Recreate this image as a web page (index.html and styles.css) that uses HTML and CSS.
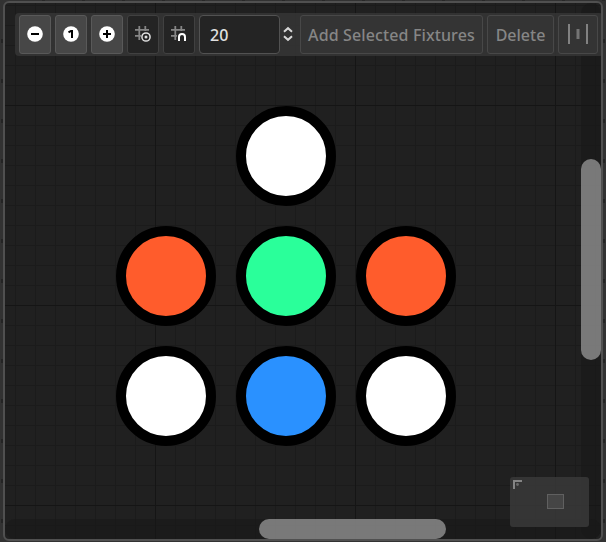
FILE: index.html
```
<!DOCTYPE html>
<html lang="en">
<head>
<meta charset="utf-8">
<title>Fixture Layout</title>
<link rel="stylesheet" href="styles.css">
</head>
<body>
<main class="graph">
  <div class="track track-v"></div>
  <div class="track track-h"></div>
  <div class="toolbar">
    <button class="btn solid" aria-label="Zoom out"><svg width="16" height="16"><circle cx="8" cy="8" r="7.8" fill="#fff"/><rect x="4" y="7" width="8" height="2" fill="#000"/></svg></button>
    <button class="btn solid" aria-label="Reset zoom"><svg width="16" height="16"><circle cx="8" cy="8" r="7.8" fill="#fff"/><path d="M5.5 6.4 8 4.9h1V12" fill="none" stroke="#000" stroke-width="2"/></svg></button>
    <button class="btn solid" aria-label="Zoom in"><svg width="16" height="16"><circle cx="8" cy="8" r="7.8" fill="#fff"/><path d="M4 8h8M8 4v8" stroke="#000" stroke-width="2"/></svg></button>
    <button class="btn dark" aria-label="Show grid"><svg width="16" height="16"><path d="M4.3 0v14M10.3 0v5M0 3.8h14M0 9.8h6" fill="none" stroke="#868686" stroke-width="1.8"/><circle cx="11" cy="11" r="4.1" fill="#252525" stroke="#e0e0e0" stroke-width="1.5"/><circle cx="11" cy="11" r="1.5" fill="#e0e0e0"/></svg></button>
    <button class="btn dark" aria-label="Snap to grid"><svg width="16" height="16"><path d="M4.3 0v14M10.3 0v5M0 3.8h14M0 9.8h6" fill="none" stroke="#868686" stroke-width="1.8"/><path d="M8 15v-4a3 3 0 0 1 6 0v4" fill="none" stroke="#fff" stroke-width="2"/></svg></button>
    <div class="spin"><input class="field" value="20" aria-label="Grid size"><svg class="arrows" width="12" height="16"><path d="M2 5.8 6 2.2 10 5.8M2 10.2 6 13.8 10 10.2" fill="none" stroke="#d8d8d8" stroke-width="2"/></svg></div>
    <button class="btn add">Add Selected Fixtures</button>
    <button class="btn delete">Delete</button>
    <button class="btn align" aria-label="Distribute"><svg width="20" height="20"><path d="M1 0v20M19 0v20" stroke="#828282" stroke-width="2"/><rect x="8.5" y="5" width="3" height="10" fill="#747474"/></svg></button>
  </div>
  <div class="node white top"></div>
  <div class="node orange left mid"></div>
  <div class="node green mid"></div>
  <div class="node orange right mid"></div>
  <div class="node white left low"></div>
  <div class="node blue low"></div>
  <div class="node white right low"></div>
  <div class="scroll scroll-v"></div>
  <div class="scroll scroll-h"></div>
  <div class="minimap"><svg width="79" height="50"><path d="M4 12V4h8" fill="none" stroke="#858585" stroke-width="2"/><circle cx="7.5" cy="7.5" r="1.4" fill="#6b6b6b"/><rect x="37.5" y="17.5" width="16" height="14" fill="#454545" stroke="#606060"/></svg></div>
</main>
</body>
</html>
```
FILE: styles.css
```
* { box-sizing: border-box; }
html { height: 100%; }
body {
  margin: 0;
  height: 542px;
  padding: 1px 3px;
  overflow: hidden;
  font-family: "Noto Sans", sans-serif;
  background:
    repeating-linear-gradient(#242424 0 4px, transparent 4px 40px) 1px 39px / 2px 100% no-repeat,
    repeating-linear-gradient(#242424 0 4px, transparent 4px 40px) 603px 39px / 2px 100% no-repeat,
    repeating-linear-gradient(90deg, #272727 0 3px, transparent 3px 40px) 42px 0 / 100% 1px no-repeat,
    #323232;
}
.graph {
  position: relative;
  width: 600px;
  height: 540px;
  border: 2px solid #505050;
  border-radius: 6px;
  overflow: hidden;
  background:
    linear-gradient(90deg, #151515 1px, transparent 1px) 150px 0 / 200px 100%,
    linear-gradient(#151515 1px, transparent 1px) 0 102px / 100% 200px,
    linear-gradient(90deg, #1b1b1b 1px, transparent 1px) 10px 0 / 20px 100%,
    linear-gradient(#1b1b1b 1px, transparent 1px) 0 2px / 100% 20px,
    #202020;
}
.track { position: absolute; background: rgba(24, 24, 24, .55); }
.track-v { top: 0; right: 0; width: 20px; height: 100%; border-radius: 10px; }
.track-h { left: 0; bottom: 0; width: 100%; height: 20px; border-radius: 10px; }
.toolbar {
  position: relative;
  display: flex;
  gap: 4px;
  width: 588px;
  height: 43px;
  margin: 10px 0 0 10px;
  padding: 2px 4px;
  border-radius: 4px;
  background: rgba(52, 52, 52, .88);
}
.btn {
  display: flex;
  flex: none;
  align-items: center;
  justify-content: center;
  height: 39px;
  padding: 0;
  border: 1px solid #484848;
  border-radius: 3px;
  background: #343434;
  color: #868686;
  font: 500 16px "Noto Sans", sans-serif;
  white-space: nowrap;
}
.btn svg { margin-top: -1px; }
.solid { width: 32px; background: #474747; border-color: #595959; }
.dark { width: 32px; background: #242424; border-color: #414141; }
.add { width: 183px; letter-spacing: .12px; }
.delete { width: 67px; }
.align { width: 40px; }
.spin { display: flex; align-items: center; gap: 2px; width: 97px; }
.arrows { margin-top: -1px; }
.field {
  width: 81px;
  height: 39px;
  padding: 0 10px;
  border: 1px solid #525252;
  border-radius: 4px;
  background: #242424;
  color: #e0e0e0;
  font: 500 16px "Noto Sans", sans-serif;
}
.node {
  position: absolute;
  left: 231px;
  width: 100px;
  height: 100px;
  border: 10px solid #000;
  border-radius: 50%;
}
.left { left: 111px; }
.right { left: 351px; }
.top { top: 103px; }
.mid { top: 223px; }
.low { top: 343px; }
.white { background: #fff; }
.orange { background: #ff5c2c; }
.green { background: #2aff9a; }
.blue { background: #2a91ff; }
.scroll { position: absolute; border-radius: 10px; background: rgba(128, 128, 128, .93); }
.scroll-v { left: 576px; top: 156px; width: 20px; height: 201px; }
.scroll-h { left: 254px; top: 516px; width: 187px; height: 20px; }
.minimap {
  position: absolute;
  left: 505px;
  top: 474px;
  width: 79px;
  height: 50px;
  border-radius: 3px;
  background: rgba(56, 56, 56, .88);
}
.minimap svg { display: block; }
```
